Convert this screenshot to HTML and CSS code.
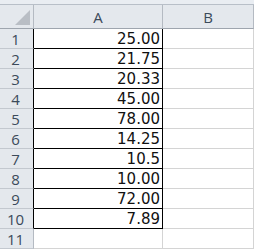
FILE: index.html
```html
<!DOCTYPE html>
<html lang="en">
<head>
  <meta charset="UTF-8">
  <title>Sheet</title>
  <link rel="stylesheet" href="styles.css">
</head>
<body>

  <div class="topbar"></div>

  <div class="sheet">
    <div class="corner"><span class="tri"></span></div>
    <div class="colhead">A</div>
    <div class="colhead">B</div>

    <div class="rowhead edge">1</div><div class="cell data">25.00</div><div class="cell"></div>
    <div class="rowhead edge">2</div><div class="cell data">21.75</div><div class="cell"></div>
    <div class="rowhead edge">3</div><div class="cell data">20.33</div><div class="cell"></div>
    <div class="rowhead edge">4</div><div class="cell data">45.00</div><div class="cell"></div>
    <div class="rowhead edge">5</div><div class="cell data">78.00</div><div class="cell"></div>
    <div class="rowhead edge">6</div><div class="cell data">14.25</div><div class="cell"></div>
    <div class="rowhead edge">7</div><div class="cell data">10.5</div><div class="cell"></div>
    <div class="rowhead edge">8</div><div class="cell data">10.00</div><div class="cell"></div>
    <div class="rowhead edge">9</div><div class="cell data">72.00</div><div class="cell"></div>
    <div class="rowhead edge">10</div><div class="cell data">7.89</div><div class="cell"></div>
    <div class="rowhead">11</div><div class="cell"></div><div class="cell"></div>
  </div>

  <div class="next-row"></div>

</body>
</html>
```

FILE: styles.css
```css
body {
  margin: 0;
  padding: 0;
  background-color: white;
  font-family: 'DejaVu Sans', Verdana, sans-serif;
  overflow: hidden;
}

.topbar {
  height: 4px;
  background-color: #e9edf2;
  border-bottom: 1px solid #b8bfc8;
}

.sheet {
  display: grid;
  grid-template-columns: 34px 129px 91px;
  grid-template-rows: 24px repeat(11, 20px);
}

.sheet > div {
  box-sizing: border-box;
  border-right: 1px solid #d4d4d4;
  border-bottom: 1px solid #d4d4d4;
}

.corner,
.colhead,
.rowhead {
  background-color: #e4e8ed;
  color: #3b4a5a;
  font-family: 'Open Sans', 'Liberation Sans', sans-serif;
  font-size: 15px;
}

.sheet > .corner,
.sheet > .colhead {
  border-right-color: #b4bac2;
  border-bottom-color: #9ea5ae;
}

.corner {
  position: relative;
}

.corner .tri {
  position: absolute;
  right: 3px;
  bottom: 3px;
  width: 0;
  height: 0;
  border-left: 15px solid transparent;
  border-bottom: 15px solid #b9bec5;
}

.colhead {
  display: flex;
  align-items: center;
  justify-content: center;
}

.rowhead {
  display: flex;
  align-items: center;
  justify-content: center;
  padding-right: 2px;
}

.sheet > .rowhead {
  border-right-color: #b4bac2;
  border-bottom-color: #c3c8cf;
}

.sheet > .rowhead.edge {
  border-right-color: #000;
}

.sheet > .data {
  border-right-color: #000;
  border-bottom-color: #000;
  display: flex;
  align-items: center;
  justify-content: flex-end;
  padding-right: 2px;
  font-size: 15px;
  color: #111;
}

.next-row {
  width: 34px;
  height: 2px;
  background-color: #f2b84b;
}
```
